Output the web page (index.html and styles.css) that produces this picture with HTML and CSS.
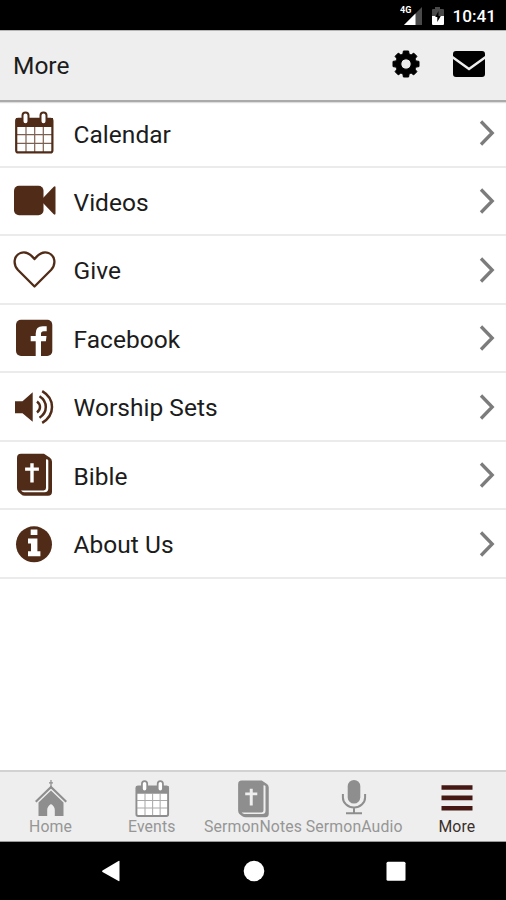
FILE: index.html
```html
<!DOCTYPE html>
<html lang="en">
<head>
<meta charset="utf-8">
<title>More</title>
<link rel="stylesheet" href="styles.css">
</head>
<body>
<svg class="defs" width="0" height="0">
  <symbol id="calendar" viewBox="0 0 48 48">
    <rect x="6.2" y="9.8" width="36.2" height="33.6" rx="2" class="paper"/>
    <path d="M6 9h37v9H6z" fill="currentColor"/>
    <path d="M16 18v25M24.7 18v25M33.3 18v25M7 25.6h35M7 34.3h35" class="grid"/>
    <rect x="6.2" y="9.8" width="36.2" height="33.6" rx="2" class="frame"/>
    <rect x="12.5" y="3.6" width="6" height="11.6" rx="3" class="ring"/>
    <rect x="30.5" y="3.6" width="6" height="11.6" rx="3" class="ring"/>
  </symbol>
  <symbol id="bible" viewBox="0 0 48 48">
    <path d="M11 2.8h23l6 4q2 1.400 2 4v30q0 4-4 4H15q-2.600 0-4-1.600L8.500 41Q7 39.500 7 37V7q0-4.200 4-4.200z" fill="currentColor"/>
    <path d="M38.300 9.500v28q0 3.700-3.700 3.700H14q-1.800 0-3-1.700h22.600q2.400 0 2.400-2.400V8.200q2.300 0 2.300 1.300z" class="light"/>
    <path d="M20.300 12.300h3.400v4.200h5.200v3.200h-5.200v11.800h-3.400V19.700h-5.200v-3.200h5.200z" class="light"/>
  </symbol>
  <symbol id="chevron" viewBox="0 0 18 28">
    <path d="M3 2.500 14.200 14 3 25.500" fill="none" stroke="currentColor" stroke-width="3.300"/>
  </symbol>
</svg>

<div class="status">
  <svg class="signal" viewBox="0 0 24 22"><path d="M22 3v18H4z" fill="#4a4a4a"/><path d="M15.500 9.500V21H4z" fill="#fff"/><text x="0" y="9" class="net">4G</text></svg>
  <svg class="battery" viewBox="0 0 14 20"><path d="M4 1h5v2h3q1 0 1 1v6H1V4q0-1 1-1h2z" fill="#4a4a4a"/><path d="M1 10h12v8q0 1-1 1H2q-1 0-1-1z" fill="#fff"/><path d="M7.500 5v5h2.300L6.300 16v-5H4.200z" fill="#000"/></svg>
  <span>10:41</span>
</div>

<header class="header">
  <h1>More</h1>
  <svg class="gear" viewBox="0 0 28 28">
    <path fill-rule="evenodd" fill="currentColor" stroke="currentColor" stroke-width="1" stroke-linejoin="round" d="M11.400 1h5.200l.5 3.100 2 .9 2.600-1.900 3.200 3.200-1.900 2.600.9 2 3.100.5v5.200l-3.100.5-.9 2 1.900 2.600-3.200 3.200-2.600-1.900-2 .9-.5 3.100h-5.200l-.5-3.100-2-.9-2.600 1.900-3.200-3.200L5 19.100l-.9-2L1 16.600v-5.200l3.100-.5.9-2-1.900-2.600 3.200-3.200L8.900 5l2-.9zM14 8.800a5.200 5.200 0 1 0 0 10.400 5.200 5.200 0 0 0 0-10.400z"/>
  </svg>
  <svg class="mail" viewBox="0 0 32 26">
    <path fill="currentColor" d="M3 0h26q3 0 3 3v2L16 16.500 0 5V3q0-3 3-3zM0 8l16 11.500L32 8v15q0 3-3 3H3q-3 0-3-3z"/>
  </svg>
</header>

<main class="list">
  <a class="row"><svg class="icon"><use href="#calendar"/></svg><span>Calendar</span><svg class="arrow"><use href="#chevron"/></svg></a>
  <a class="row"><svg class="icon" viewBox="0 0 48 48"><rect x="4" y="8.800" width="29.500" height="29.400" rx="5" fill="currentColor"/><path d="M33 21 43.500 10q2-1.500 2 .5v26q0 2-2 .5L33 26z" fill="currentColor"/></svg><span>Videos</span><svg class="arrow"><use href="#chevron"/></svg></a>
  <a class="row"><svg class="icon" viewBox="0 0 48 48"><path d="M24.500 40.500 8 24C2.500 18 4 9.500 10.500 7c5-2 9.500.3 14 6 4.500-5.700 9-8 14-6C45 9.500 46.500 18 41 24z" fill="none" stroke="currentColor" stroke-width="2.300" stroke-linejoin="round"/></svg><span>Give</span><svg class="arrow"><use href="#chevron"/></svg></a>
  <a class="row"><svg class="icon" viewBox="0 0 48 48"><rect x="6" y="5.700" width="36.300" height="36.300" rx="5" fill="currentColor"/><path d="M25.700 42.500V27.200h-5V22h5v-2.500q0-7.200 7-7.200h4v5h-3q-2.700 0-2.700 2.500V22h5.500l-.6 5.200H31v15.300z" class="light"/></svg><span>Facebook</span><svg class="arrow"><use href="#chevron"/></svg></a>
  <a class="row"><svg class="icon" viewBox="0 0 48 48"><path d="M5 18.300h7.500l10.200-9v29.400l-10.200-8.500H5z" fill="currentColor"/><path d="M27 18.500q3 2.300 3 5.500t-3 5.500M29.500 13.300q6.300 4 6.300 10.700t-6.300 10.700M32.200 8.200Q42 14 42 24t-9.800 15.800" fill="none" stroke="currentColor" stroke-width="2.500"/></svg><span>Worship Sets</span><svg class="arrow"><use href="#chevron"/></svg></a>
  <a class="row"><svg class="icon"><use href="#bible"/></svg><span>Bible</span><svg class="arrow"><use href="#chevron"/></svg></a>
  <a class="row"><svg class="icon" viewBox="0 0 48 48"><circle cx="24" cy="24.300" r="18" fill="currentColor"/><path d="M20.700 9.500h6.700v5.600h-6.700zM18 18.500h9.400v12.800h3v4.900H18v-4.900h3v-7.800h-3z" class="light"/></svg><span>About Us</span><svg class="arrow"><use href="#chevron"/></svg></a>
</main>

<nav class="tabs">
  <a class="tab"><svg viewBox="0 0 40 40"><path d="M20 1v9M18 3.800h4" fill="none" stroke="currentColor" stroke-width="1.200"/><path d="M20 6.500 36 22l-1.500 1.500L20 9.500 5.500 23.500 4 22z" fill="currentColor"/><path d="M20 11.500 32.500 23.500V37h-8.700v-6q0-3.500-3.800-6-3.800 2.500-3.800 6v6H7.500V23.500z" fill="currentColor"/></svg><span>Home</span></a>
  <a class="tab"><svg class="large"><use href="#calendar"/></svg><span>Events</span></a>
  <a class="tab"><svg class="large"><use href="#bible"/></svg><span>SermonNotes</span></a>
  <a class="tab"><svg viewBox="0 0 40 40"><rect x="13.700" y="1" width="12.600" height="23.500" rx="6.300" fill="currentColor"/><path d="M8.900 15v3.500a11.100 10 0 0 0 22.200 0V15M20 28.500v6M12 34.300h16" fill="none" stroke="currentColor" stroke-width="2"/></svg><span>SermonAudio</span></a>
  <a class="tab active"><svg viewBox="0 0 40 40"><path d="M4.500 8.500h31M4.500 18.900h31M4.500 29.300h31" fill="none" stroke="currentColor" stroke-width="4.600"/></svg><span>More</span></a>
</nav>

<footer class="system">
  <svg viewBox="0 0 22 22"><path d="M18.500 1.500v19q0 1-1 .5L1.500 12q-1-.8 0-1.500l16-9.500q1-.5 1 .5z"/></svg>
  <svg viewBox="0 0 22 22"><circle cx="11" cy="11" r="10.300"/></svg>
  <svg viewBox="0 0 22 22"><rect x="1.500" y="1.700" width="19" height="19" rx="1.500"/></svg>
</footer>
</body>
</html>
```

FILE: styles.css
```css
* { box-sizing: border-box; }
body {
  margin: 0;
  height: 900px;
  display: flex;
  flex-direction: column;
  background: #fff;
  color: #1c1c1c;
  font-family: Roboto, "Liberation Sans", sans-serif;
  overflow: hidden;
}
svg { display: block; flex: none; }
.defs { position: absolute; }

.status {
  height: 30px;
  background: #000;
  color: #fff;
  display: flex;
  align-items: center;
  justify-content: flex-end;
  padding: 2px 10px 0 0;
  font-size: 17.2px;
  font-weight: 500;
}
.signal { width: 24px; height: 22px; margin: 0 7px 2px 0; }
.net { font-size: 9px; font-weight: 700; fill: #fff; }
.battery { width: 14px; height: 20px; margin: 0 7px 0 0; }

.header {
  height: 72px;
  background: #eee;
  border-top: 1px solid #b5b5b5;
  border-bottom: 2px solid #aaa;
  box-shadow: 0 1px 1px #ddd;
  display: flex;
  align-items: center;
  padding: 0 21.5px 2px 13px;
  color: #000;
}
.header h1 {
  flex: 1;
  margin: 0;
  padding-top: 2px;
  font-size: 24.5px;
  font-weight: 400;
  color: #1c1c1c;
}
.gear { width: 28px; height: 28px; margin: 0 33px 1px 0; }
.mail { width: 32px; height: 26px; margin-bottom: 1px; }

.list { flex: 1; --light: #fff; color: #502b17; }
.row {
  height: 68.5px;
  display: flex;
  align-items: center;
  padding: 1px 10px 0;
  border-bottom: 2px solid #ebebeb;
}
.row:first-child { height: 65.5px; padding-bottom: 2px; }
.icon { width: 48px; height: 48px; }
.row span {
  flex: 1;
  margin-left: 15.5px;
  padding-top: 2px;
  font-size: 24.5px;
  letter-spacing: .03px;
  color: #1c1c1c;
}
.arrow { width: 18px; height: 28px; color: #7c7c7c; }
.light { fill: var(--light); }
.paper { fill: #fff; }
.frame { fill: none; stroke: currentColor; stroke-width: 2.2; }
.grid { fill: none; stroke: currentColor; stroke-width: 1.2; opacity: .75; }
.ring { fill: #fff; stroke: currentColor; stroke-width: 2; }

.tabs {
  height: 72px;
  background: #eee;
  border-top: 2px solid #d2d2d2;
  border-bottom: 1px solid #999;
  display: grid;
  grid-template-columns: repeat(5, 1fr);
  --light: #eee;
  color: #8e8e8e;
}
.tab {
  display: flex;
  flex-direction: column;
  align-items: center;
  padding-top: 7px;
  font-size: 15.8px;
  line-height: 18px;
  letter-spacing: .12px;
}
.tab svg { width: 40px; height: 40px; margin-bottom: -1px; }
.tab svg.large { width: 42px; height: 42px; margin: -1px 0 -2px; }
.tab span { white-space: nowrap; }
.tab.active { color: #451813; padding-left: 3px; }
.tab.active span { color: #3a302c; }
.tab:not(.active) span { color: #969696; }

.system {
  height: 58px;
  background: #000;
  display: flex;
  align-items: center;
  justify-content: space-between;
  padding: 0 99px 0 101px;
}
.system svg { width: 22px; height: 22px; fill: #fff; }
```
